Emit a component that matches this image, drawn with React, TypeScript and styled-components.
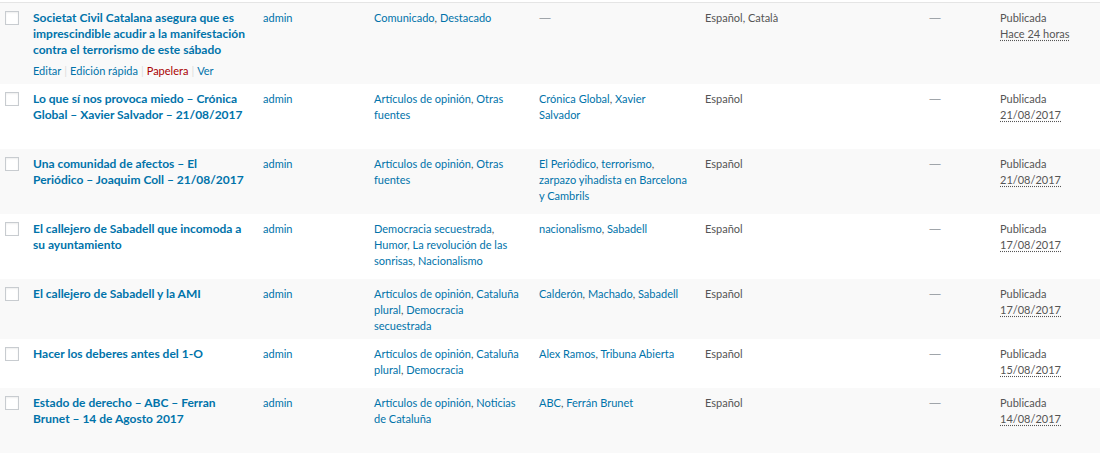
import React from "react";
import styled, { createGlobalStyle } from "styled-components";

const Global = createGlobalStyle`
  html, body { margin: 0; padding: 0; background: #ffffff; }
  body { font-family: Lato, "Open Sans", sans-serif; color: #555; }
`;

const Table = styled.div`
  width: 1100px;
  margin-top: 2px;
  border-top: 1px solid #e5e5e5;
`;

const Row = styled.div<{ $alt: boolean }>`
  display: grid;
  grid-template-columns: 23px 230px 111px 165px 166px 224px 71px 110px;
  background: ${(p) => (p.$alt ? "#f9f9f9" : "#ffffff")};
  padding: 7px 0 5px;
`;

const Cell = styled.div<{ $pr?: number }>`
  padding: 0 ${(p) => (p.$pr ?? 10)}px 0 10px;
  font-size: 11px;
  line-height: 16px;
  color: #555;
  min-width: 0;
`;

const CheckCell = styled.div`
  padding: 1px 0 0 5px;
`;

const Check = styled.span`
  display: block;
  width: 14px;
  height: 14px;
  box-sizing: border-box;
  border: 1px solid #c8ccd0;
  background: #fff;
  box-shadow: inset 0 1px 2px rgba(0, 0, 0, 0.07);
`;

const Title = styled.a`
  display: block;
  font-size: 12px;
  font-weight: 700;
  line-height: 16px;
  color: #0073aa;
  text-decoration: none;
`;

const Actions = styled.div<{ $show: boolean }>`
  padding-top: 5px;
  font-size: 11px;
  line-height: 16px;
  color: #ddd;
  white-space: nowrap;
  visibility: ${(p) => (p.$show ? "visible" : "hidden")};
`;

const ActionLink = styled.a<{ $danger?: boolean }>`
  color: ${(p) => (p.$danger ? "#a00" : "#0073aa")};
  text-decoration: none;
`;

const Sep = styled.span`
  color: #ddd;
  margin: 0 3px;
`;

const Link = styled.a`
  color: #0073aa;
  text-decoration: none;
`;

const Dash = styled.span`
  font-family: "Open Sans", sans-serif;
  font-size: 12px;
  color: #a0a5aa;
`;

const DateAbbr = styled.abbr`
  color: #555;
  text-decoration: underline dotted;
  text-underline-offset: 2px;
`;

type Post = {
  title: string;
  cats: string[];
  tags: string[];
  lang: string;
  date: string;
};

const posts: Post[] = [
  {
    title:
      "Societat Civil Catalana asegura que es imprescindible acudir a la manifestación contra el terrorismo de este sábado",
    cats: ["Comunicado", "Destacado"],
    tags: [],
    lang: "Español, Català",
    date: "Hace 24 horas",
  },
  {
    title: "Lo que sí nos provoca miedo – Crónica Global – Xavier Salvador – 21/08/2017",
    cats: ["Artículos de opinión", "Otras fuentes"],
    tags: ["Crónica Global", "Xavier Salvador"],
    lang: "Español",
    date: "21/08/2017",
  },
  {
    title: "Una comunidad de afectos – El Periódico – Joaquim Coll – 21/08/2017",
    cats: ["Artículos de opinión", "Otras fuentes"],
    tags: ["El Periódico", "terrorismo", "zarpazo yihadista en Barcelona y Cambrils"],
    lang: "Español",
    date: "21/08/2017",
  },
  {
    title: "El callejero de Sabadell que incomoda a su ayuntamiento",
    cats: ["Democracia secuestrada", "Humor", "La revolución de las sonrisas", "Nacionalismo"],
    tags: ["nacionalismo", "Sabadell"],
    lang: "Español",
    date: "17/08/2017",
  },
  {
    title: "El callejero de Sabadell y la AMI",
    cats: ["Artículos de opinión", "Cataluña plural", "Democracia secuestrada"],
    tags: ["Calderón", "Machado", "Sabadell"],
    lang: "Español",
    date: "17/08/2017",
  },
  {
    title: "Hacer los deberes antes del 1-O",
    cats: ["Artículos de opinión", "Cataluña plural", "Democracia"],
    tags: ["Alex Ramos", "Tribuna Abierta"],
    lang: "Español",
    date: "15/08/2017",
  },
  {
    title: "Estado de derecho – ABC – Ferran Brunet – 14 de Agosto 2017",
    cats: ["Artículos de opinión", "Noticias de Cataluña"],
    tags: ["ABC", "Ferrán Brunet"],
    lang: "Español",
    date: "14/08/2017",
  },
];

const LinkList = ({ items }: { items: string[] }) =>
  items.length === 0 ? (
    <Dash>—</Dash>
  ) : (
    <>
      {items.map((t, i) => (
        <React.Fragment key={t}>
          <Link href="#">{t}</Link>
          {i < items.length - 1 ? ", " : ""}
        </React.Fragment>
      ))}
    </>
  );

export default function App() {
  return (
    <>
      <Global />
      <Table>
        {posts.map((p, i) => (
          <Row key={i} $alt={i % 2 === 0}>
            <CheckCell>
              <Check />
            </CheckCell>
            <Cell $pr={6}>
              <Title href="#">{p.title}</Title>
              <Actions $show={i === 0}>
                <ActionLink href="#">Editar</ActionLink>
                <Sep>|</Sep>
                <ActionLink href="#">Edición rápida</ActionLink>
                <Sep>|</Sep>
                <ActionLink href="#" $danger>
                  Papelera
                </ActionLink>
                <Sep>|</Sep>
                <ActionLink href="#">Ver</ActionLink>
              </Actions>
            </Cell>
            <Cell>
              <Link href="#">admin</Link>
            </Cell>
            <Cell>
              <LinkList items={p.cats} />
            </Cell>
            <Cell $pr={8}>
              <LinkList items={p.tags} />
            </Cell>
            <Cell>{p.lang}</Cell>
            <Cell>
              <Dash>—</Dash>
            </Cell>
            <Cell>
              Publicada
              <br />
              <DateAbbr title={p.date}>{p.date}</DateAbbr>
            </Cell>
          </Row>
        ))}
      </Table>
    </>
  );
}
